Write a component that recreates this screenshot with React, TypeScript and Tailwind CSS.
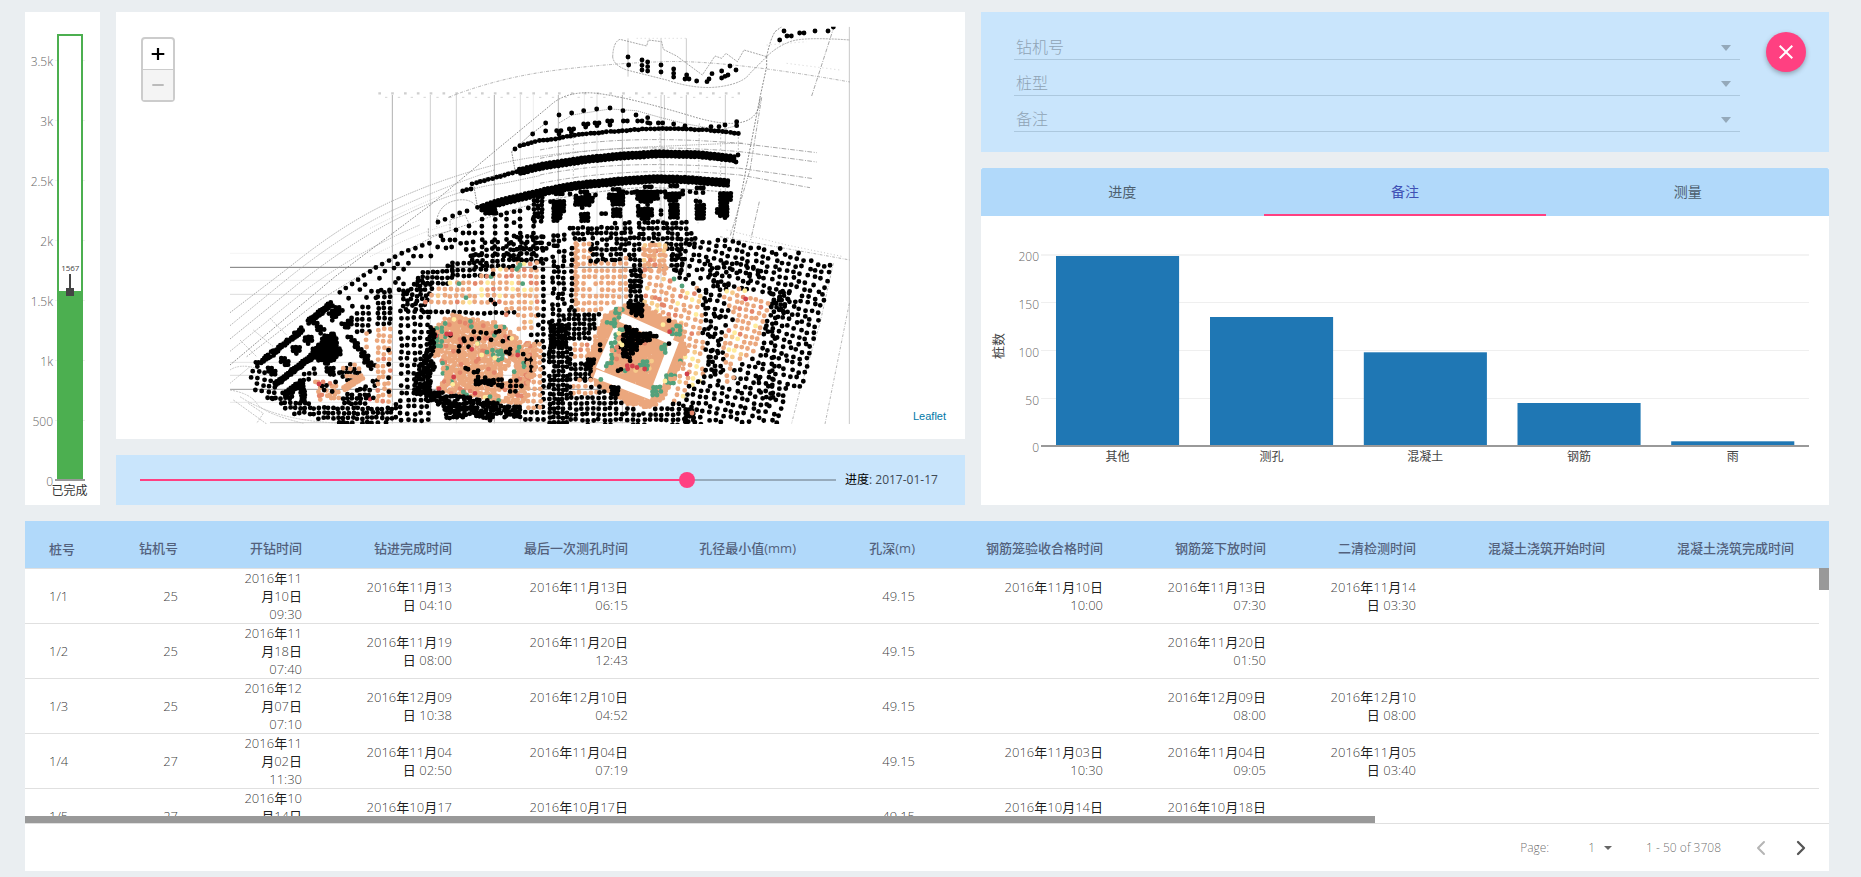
import React from "react";
import { ChevronLeft, ChevronRight } from "lucide-react";

type Pt = [number, number];

/* ---------- pile map ---------- */

const INK: Record<string, string> = {
  k: "#000000",
  o: "#eba77d",
  s: "#e4866b",
  g: "#53a17b",
  y: "#ffec9c",
  a: "#f6cb8b",
  r: "#d1404a",
};

let seed = 20170117;
const rnd = () => {
  seed = (seed + 0x6d2b79f5) | 0;
  let t = Math.imul(seed ^ (seed >>> 15), 1 | seed);
  t = (t + Math.imul(t ^ (t >>> 7), 61 | t)) ^ t;
  return ((t ^ (t >>> 14)) >>> 0) / 4294967296;
};

type Layer = { color: string; d: string; width?: number };
const layers: Layer[] = [];

const put = (items: { p: Pt; c: string }[]) => {
  const by: Record<string, string> = {};
  items.forEach(({ p, c }) => {
    by[c] = (by[c] || "") + `M${p[0].toFixed(1)} ${p[1].toFixed(1)}h.01`;
  });
  Object.keys(by).forEach((c) => layers.push({ color: INK[c], d: by[c] }));
};

const inside = (x: number, y: number, poly: Pt[]) => {
  let hit = false;
  for (let i = 0, j = poly.length - 1; i < poly.length; j = i++) {
    const [xi, yi] = poly[i];
    const [xj, yj] = poly[j];
    if (yi > y !== yj > y && x < ((xj - xi) * (y - yi)) / (yj - yi) + xi) hit = !hit;
  }
  return hit;
};

type FillOptions = {
  dx?: number;
  dy?: number;
  rot?: number;
  jit?: number;
  keep?: number;
  mix?: string;
  holes?: Pt[][];
  stagger?: boolean;
};

const fill = (poly: Pt[], o: FillOptions = {}) => {
  const { dx = 19, dy = 20, rot = 0, jit = 2, keep = 1, mix = "k", holes = [], stagger = false } = o;
  const xs = poly.map((p) => p[0]);
  const ys = poly.map((p) => p[1]);
  const cx = (Math.min(...xs) + Math.max(...xs)) / 2;
  const cy = (Math.min(...ys) + Math.max(...ys)) / 2;
  const reach = Math.hypot(Math.max(...xs) - cx, Math.max(...ys) - cy) + 20;
  const cos = Math.cos((rot * Math.PI) / 180);
  const sin = Math.sin((rot * Math.PI) / 180);
  const items: { p: Pt; c: string }[] = [];
  const ni = Math.ceil(reach / dx);
  const nj = Math.ceil(reach / dy);
  for (let j = -nj; j <= nj; j++) {
    for (let i = -ni; i <= ni; i++) {
      const u = i * dx + (stagger && j % 2 ? dx / 2 : 0) + (rnd() - 0.5) * 2 * jit;
      const v = j * dy + (rnd() - 0.5) * 2 * jit;
      const x = cx + u * cos - v * sin;
      const y = cy + u * sin + v * cos;
      if (rnd() > keep) continue;
      if (!inside(x, y, poly) || holes.some((h) => inside(x, y, h))) continue;
      items.push({ p: [x, y], c: mix[Math.floor(rnd() * mix.length)] });
    }
  }
  put(items);
};

const rect = (x0: number, y0: number, x1: number, y1: number): Pt[] => [
  [x0, y0],
  [x1, y0],
  [x1, y1],
  [x0, y1],
];

const chain = (pts: Pt[], step = 13, rows = 1, gap = 13, jit = 1, mix = "k") => {
  const items: { p: Pt; c: string }[] = [];
  for (let r = 0; r < rows; r++) {
    let carry = 0;
    for (let i = 0; i < pts.length - 1; i++) {
      const [x0, y0] = pts[i];
      const [x1, y1] = pts[i + 1];
      const len = Math.hypot(x1 - x0, y1 - y0);
      const nx = -(y1 - y0) / len;
      const ny = (x1 - x0) / len;
      let t = carry;
      for (; t <= len; t += step) {
        const off = r * gap;
        items.push({
          p: [
            x0 + ((x1 - x0) * t) / len + nx * off + (rnd() - 0.5) * 2 * jit,
            y0 + ((y1 - y0) * t) / len + ny * off + (rnd() - 0.5) * 2 * jit,
          ],
          c: mix[Math.floor(rnd() * mix.length)],
        });
      }
      carry = t - len;
    }
  }
  put(items);
};

const dots = (pts: Pt[], c = "k") => put(pts.map((p) => ({ p, c })));
const E = (pts: Pt[]): Pt[] => pts.map(([x, y]) => [x + 960, y]);
const C = (pts: Pt[]): Pt[] => pts.map(([x, y]) => [x + 540, y + 510]);
const path = (pts: Pt[]) => "M" + pts.map((p) => p.join(" ")).join("L");

/* northern islands */
dots(
  E([
    [264, 141], [266, 165], [306, 150], [306, 166], [306, 180], [323, 156], [323, 170], [323, 183],
    [363, 165], [363, 186], [401, 177], [401, 190], [401, 201], [440, 195], [435, 207], [447, 207],
    [470, 213], [501, 215], [507, 207], [516, 191], [545, 183], [545, 204], [555, 199], [564, 195],
    [570, 168], [588, 180], [732, 63], [719, 90], [741, 78], [754, 78], [779, 69], [792, 69],
    [825, 63], [864, 63], [880, 51],
  ]),
);
/* crown row */
dots(
  E([
    [-22, 372], [17, 339], [17, 363], [57, 315], [95, 309], [131, 302], [170, 297], [210, 294],
    [249, 302], [288, 315], [323, 323], [590, 335], [590, 347], [50, 362], [63, 362], [57, 372],
    [88, 357], [101, 357], [94, 367], [131, 342], [144, 342], [137, 351], [165, 339], [177, 339],
    [171, 347], [203, 333], [215, 333], [210, 345], [250, 333], [262, 333], [293, 333], [306, 333],
    [323, 338], [330, 340], [355, 339], [368, 339], [401, 342], [435, 348], [513, 350], [537, 350],
    [555, 345],
  ]),
);
dots([[885, 417], [728, 543], [740, 539], [753, 537]]);
chain([[900, 408], [960, 392], [1015, 385], [1070, 374], [1160, 366], [1290, 356], [1400, 357], [1470, 361], [1556, 370]], 12);
chain([[757, 522], [823, 504], [890, 485]], 12.5);
chain([[898, 478], [960, 463], [1020, 454], [1090, 443], [1200, 432], [1320, 425], [1440, 428], [1548, 440]], 11.8, 2, 13, 0.5);
chain([[898, 484], [960, 469], [1020, 460], [1090, 449], [1200, 438], [1320, 431], [1440, 434], [1548, 446]], 11.8, 1, 0, 0.5);
dots([[1554, 435], [1548, 456]]);
chain([[772, 591], [785, 588]], 13);
chain([[790, 586], [823, 574], [900, 555], [960, 541], [1020, 528], [1090, 517], [1200, 507], [1300, 500], [1400, 502], [1535, 513]], 11.8, 3, 7, 0.5);

/* scattered dots on the left shoulder */
dots([
  [654, 636], [675, 628], [698, 618], [719, 609], [741, 603], [708, 660], [747, 648], [663, 678],
  [669, 690], [690, 690], [705, 690], [722, 700], [653, 711], [678, 714], [695, 711], [729, 669],
  [747, 669], [765, 669], [785, 600], [800, 608], [812, 604], [825, 600], [843, 615], [860, 609],
  [882, 605], [900, 603], [925, 594], [882, 638], [882, 678],
]);
for (const x of [786, 825, 860, 900, 940]) chain([[x, 628], [x, 735]], 20.5);
fill([[785, 590], [830, 585], [830, 612], [785, 612]], { dx: 11, dy: 10 });
fill(rect(940, 560, 968, 635), { dx: 11, dy: 12 });
fill(rect(730, 685, 900, 750), { keep: 0.6 });

/* masses under the third row */
const mass = { dx: 10, dy: 9.5, jit: 1 };
fill(C([[450, 62], [492, 58], [492, 98], [478, 130], [460, 130], [458, 95]]), mass);
fill(C([[522, 48], [592, 44], [575, 78], [545, 85], [525, 75]]), mass);
fill(C(rect(536, 94, 572, 130)), mass);
fill(C([[618, 42], [672, 32], [678, 76], [638, 74]]), mass);
fill(C(rect(632, 80, 668, 116)), mass);
fill(C([[700, 34], [785, 34], [775, 55], [742, 76], [715, 62]]), mass);
fill(C(rect(706, 78, 764, 116)), mass);
fill(C([[788, 34], [868, 32], [840, 55], [825, 70], [800, 58]]), mass);
fill(C(rect(804, 68, 840, 118)), mass);
fill(E(rect(462, 582, 500, 628)), mass);
fill(E([[532, 545], [580, 548], [562, 600], [562, 632], [523, 605], [538, 590]]), mass);
dots(E([[363, 602], [363, 613], [185, 611], [197, 611], [468, 548], [489, 548], [468, 573], [480, 575], [555, 623], [570, 560]]));
dots(E([[90, 552], [108, 558], [125, 562], [260, 548], [275, 548], [290, 545], [450, 545], [375, 545]]));
for (const x of [57, 131, 228, 324, 401, 480]) {
  const y = 526 + Math.abs(x - 380) * 0.08;
  dots([[x + 951, y], [x + 963, y], [x + 970, y]]);
}

/* left shoulder and sparse belt */
chain([[360, 848], [455, 780], [540, 732], [640, 694]], 22);
fill([[365, 862], [460, 792], [550, 742], [650, 705], [650, 760], [610, 790], [600, 830], [530, 850], [420, 880], [400, 895]], {
  dx: 28, dy: 21, keep: 0.78, jit: 5, stagger: true,
});
fill([[540, 850], [590, 810], [640, 815], [630, 850], [610, 900], [540, 900]], { dx: 14, dy: 15, jit: 4 });
fill(rect(695, 752, 800, 805), { dx: 17, dy: 18 });
fill([[605, 780], [700, 765], [700, 815], [640, 840], [605, 835]], { dx: 15, dy: 17 });
fill([[740, 730], [860, 700], [960, 685], [960, 755], [900, 768], [760, 785]], { dx: 16, dy: 17, keep: 0.88, jit: 3 });

/* western wedge */
fill([[78, 1070], [125, 1080], [180, 1130], [160, 1180], [95, 1135]], { dx: 19, dy: 18, rot: 10 });
chain([[110, 1060], [190, 1000], [245, 955]], 9, 2, 8, 3);
chain([[262, 932], [335, 876]], 8, 2, 9, 2);
fill([[265, 925], [290, 930], [318, 965], [300, 975]], mass);
fill([[322, 910], [355, 885], [372, 905], [340, 938]], mass);
fill([[362, 940], [395, 922], [407, 940], [375, 962]], mass);
fill([[248, 985], [270, 973], [282, 995], [260, 1010]], mass);
fill([[210, 1015], [235, 1003], [247, 1025], [225, 1040]], mass);
fill([[178, 1045], [200, 1038], [210, 1062], [188, 1072]], mass);
fill([[138, 1075], [160, 1066], [172, 1090], [155, 1102]], mass);
fill([[275, 1020], [320, 970], [350, 962], [352, 1005], [372, 1030], [320, 1068], [285, 1050]], { dx: 9, dy: 9 });
chain([[165, 1118], [300, 1016]], 8, 2, 9, 2);
fill([[378, 975], [395, 975], [470, 1070], [450, 1082]], mass);
fill([[315, 1075], [345, 1070], [345, 1095], [325, 1098]], mass);
fill([[350, 1085], [400, 1055], [435, 1080], [400, 1120], [375, 1115]], { dx: 12, dy: 12, mix: "kko" });
chain([[370, 1132], [425, 1096]], 8, 2, 9, 1, "o");
chain([[190, 1150], [240, 1115]], 9, 2, 9, 2);
chain([[250, 1110], [255, 1180]], 9, 2, 9, 2);
fill([[205, 1140], [235, 1130], [225, 1160], [200, 1165]], { dx: 13, dy: 13 });
fill([[245, 1080], [290, 1072], [290, 1100], [255, 1112]], { dx: 15, dy: 15 });
fill([[285, 1115], [352, 1115], [357, 1165], [290, 1170]], { dx: 12, dy: 12, jit: 4, mix: "ooosokk" });
dots([[297, 1122], [450, 1167]], "r");
fill([[365, 1155], [430, 1130], [455, 1095], [480, 1100], [470, 1160], [430, 1185], [370, 1180]], { dx: 13, dy: 13, keep: 0.75, jit: 3 });
fill([[125, 1150], [200, 1160], [260, 1180], [340, 1185], [400, 1190], [528, 1180], [528, 1240], [350, 1240], [220, 1212]], {
  dx: 14.5, dy: 14.5, jit: 3,
});

/* western columns */
fill(rect(462, 842, 522, 945), { dx: 17, dy: 16 });
fill(rect(395, 885, 462, 970), { dx: 18, dy: 18, keep: 0.85 });
fill([[425, 960], [455, 980], [455, 1020], [430, 1010]], { dx: 16, mix: "o" });
fill(rect(460, 948, 522, 1185), { dx: 17, dy: 18, jit: 3, mix: "oooooooos" });
chain([[506, 1020], [506, 1180]], 42);
fill(rect(534, 895, 632, 1240), { dx: 20, dy: 20.5, jit: 3, keep: 0.97 });
chain([[612, 907], [700, 905], [770, 910], [885, 907]], 18);

/* orange belt */
fill([[608, 865], [690, 815], [765, 800], [860, 762], [960, 750], [960, 897], [940, 965], [890, 965], [882, 900], [868, 925], [850, 920], [850, 895], [720, 895], [620, 895]], {
  dx: 18.5, dy: 19.5, keep: 0.97, mix: "oooooooooossay",
});
dots([[717, 821], [738, 863], [813, 800], [908, 821], [895, 772], [900, 765], [890, 778]], "g");
dots([[819, 792], [813, 870], [825, 882], [945, 773], [955, 945], [955, 915]]);

/* round tower */
const tower: Pt[] = [
  [645, 950], [690, 912], [745, 922], [840, 938], [885, 978], [905, 998], [953, 1000], [953, 1070], [932, 1110],
  [912, 1182], [840, 1178], [780, 1164], [650, 1144], [670, 1100], [640, 1030],
];
const towerGaps: Pt[][] = [
  [[825, 1022], [850, 1025], [855, 1045], [835, 1045]],
  [[850, 1095], [880, 1050], [888, 1080], [862, 1120]],
  [[835, 1145], [870, 1140], [855, 1170], [838, 1165]],
  [[640, 1040], [662, 1040], [665, 1085], [640, 1130]],
];
fill(tower, { dx: 10, dy: 10, jit: 4, mix: "ooooooooooooos", holes: towerGaps });
const greens: Pt[][] = [
  [[640, 955], [690, 930], [675, 1000], [650, 1030], [640, 1020]],
  [[665, 1055], [695, 1070], [700, 1120], [670, 1110]],
  [[750, 932], [785, 940], [775, 965], [755, 960]],
  [[820, 938], [860, 945], [850, 965], [830, 960]],
  [[860, 990], [905, 1000], [895, 1030], [865, 1025]],
  [[905, 1045], [925, 1060], [915, 1095], [900, 1070]],
  [[790, 1015], [850, 1010], [850, 1060], [810, 1040]],
];
greens.forEach((g) => fill(g, { dx: 13, dy: 13, jit: 3, mix: "ggo" }));
fill(tower, { dx: 38, dy: 34, jit: 15, keep: 0.4, mix: "ssgsk" });
fill(C([[190, 560], [245, 572], [265, 592], [318, 600], [305, 620], [260, 612], [225, 615], [225, 590]]), { dx: 10, dy: 11, jit: 4, keep: 0.75 });
fill(C([[175, 480], [215, 465], [235, 500], [205, 530], [170, 540]]), { dx: 15, dy: 15, jit: 6, keep: 0.6 });
fill([[740, 940], [830, 945], [900, 1010], [870, 1040], [800, 980], [750, 1000]], { dx: 22, dy: 20, jit: 8, keep: 0.6 });
fill([[905, 1030], [935, 1040], [935, 1085], [915, 1060]], { dx: 12, dy: 12 });
fill([[850, 1105], [925, 1115], [905, 1150], [865, 1145]], { dx: 17, dy: 15, keep: 0.7 });
dots([[680, 972], [692, 972], [648, 977], [755, 1018], [893, 1035], [701, 1101], [657, 1137], [765, 1150]], "r");
dots([[730, 1146], [740, 1155], [836, 1171], [810, 1160]], "g");
dots([[702, 928], [772, 1001], [824, 1044], [785, 1035], [875, 985], [698, 1123], [795, 1162]], "y");
fill(
  C([[85, 440], [105, 440], [110, 470], [95, 540], [108, 560], [88, 630], [150, 640], [240, 655], [300, 672], [362, 675], [362, 715],
    [300, 712], [270, 722], [220, 708], [140, 718], [125, 680], [75, 660], [40, 635], [45, 590], [60, 540], [85, 500]]),
  { dx: 10, dy: 10, jit: 3.5, keep: 0.95 },
);

/* central columns */
fill(C([[350, 170], [440, 160], [440, 250], [415, 245], [350, 240]]), { dx: 15, dy: 17, keep: 0.85 });
fill(C([[415, 165], [448, 160], [448, 730], [375, 730], [375, 685], [410, 680], [425, 500], [375, 475], [378, 455], [415, 450], [412, 260]]), {
  dx: 18.5, dy: 19.5, keep: 0.95, jit: 2,
});
fill(C([[448, 155], [502, 160], [502, 430], [448, 430]]), { dx: 15.5, dy: 16, keep: 0.9, jit: 3 });
fill(C([[448, 430], [502, 430], [502, 500], [448, 500]]), { dx: 11, dy: 10 });
fill(C(rect(448, 500, 502, 730)), { dx: 13, dy: 14, jit: 2 });
fill(rect(922, 1000, 962, 1195), { dx: 18, dy: 19, mix: "o" });
fill(C([[508, 140], [600, 128], [700, 122], [860, 118], [885, 160], [900, 190], [850, 195], [850, 285], [805, 270], [800, 190], [725, 190], [720, 330], [690, 330], [690, 240], [575, 245], [575, 190], [510, 185]]), {
  dx: 14, dy: 16, jit: 3, keep: 0.86,
});
fill(C([[520, 182], [572, 182], [572, 245], [610, 250], [610, 240], [690, 232], [690, 350], [655, 370], [600, 400], [575, 400], [520, 390]]), {
  dx: 18, dy: 19.5, keep: 0.92, mix: "o",
});
chain(C([[527, 190], [527, 385]]), 14, 1, 0, 1, "o");
fill(C(rect(508, 185, 522, 400)), { dx: 14, dy: 18 });
fill(C(rect(542, 205, 600, 245)), { dx: 18, dy: 18, keep: 0.6 });
fill(C(rect(690, 260, 725, 375)), { dx: 14, dy: 15, jit: 3 });
fill(C([[728, 195], [755, 180], [800, 195], [803, 290], [825, 330], [900, 320], [905, 390], [915, 590], [850, 650], [815, 670], [850, 500], [840, 420], [760, 390], [728, 370]]), {
  dx: 20, dy: 19, rot: 14, jit: 3, mix: "oooooooooosya",
});
fill(C([[728, 198], [755, 182], [798, 198], [800, 270], [728, 270]]), { dx: 15, dy: 15, mix: "oooosa" });
dots(E([[402, 807], [426, 828]]), "g");
dots(E([[390, 812], [346, 863], [366, 884]]), "s");
fill(C([[505, 385], [575, 400], [600, 400], [590, 450], [565, 480], [505, 480]]), { dx: 15, dy: 14 });
fill(C([[520, 482], [568, 482], [560, 540], [520, 540]]), { dx: 18, dy: 18, mix: "oooos" });
fill(C([[503, 500], [520, 500], [520, 540], [560, 540], [580, 600], [503, 605]]), { dx: 15, dy: 15 });
fill(C(rect(520, 600, 590, 640)), { dx: 18, dy: 18, mix: "oook" });

/* square tower */
fill(
  C([[650, 385], [690, 372], [740, 375], [780, 402], [842, 430], [850, 480], [864, 500], [822, 600], [792, 650], [772, 675], [740, 686],
    [680, 672], [640, 640], [585, 615], [572, 570], [558, 540], [588, 460], [612, 408]]),
  { dx: 9.5, dy: 9.5, jit: 2, mix: "o" },
);
const band = (a: Pt, b: Pt) => layers.push({ color: "#ffffff", d: path(C([a, b])), width: 27 });
band([662, 412], [818, 482]);
band([655, 445], [600, 568]);
band([585, 580], [755, 646]);
band([824, 482], [772, 618]);
fill(C([[665, 450], [790, 495], [745, 620], [615, 568]]), { dx: 40, dy: 34, jit: 14, keep: 0.6, mix: "sag" });
[
  C([[640, 385], [675, 385], [660, 415], [642, 405]]),
  C([[615, 418], [650, 418], [645, 440], [615, 438]]),
  C([[810, 432], [848, 435], [842, 468], [812, 462]]),
  C([[778, 418], [805, 420], [800, 435], [785, 435]]),
  C([[830, 525], [850, 535], [845, 558], [832, 550]]),
  C([[800, 580], [828, 580], [820, 615], [795, 615]]),
  C([[755, 615], [788, 618], [780, 652], [752, 648]]),
  C([[592, 588], [615, 592], [610, 606], [596, 604]]),
  C([[785, 492], [805, 495], [800, 520], [785, 512]]),
  C([[712, 540], [748, 545], [742, 572], [712, 566]]),
].forEach((p) => fill(p, { dx: 11, dy: 11, mix: "gggggo" }));
fill(C([[650, 440], [678, 445], [655, 520], [655, 545], [615, 560], [630, 500]]), { dx: 12, dy: 12, jit: 4, mix: "ggggoyks" });
fill(C([[678, 436], [775, 468], [742, 488], [722, 492], [692, 545], [665, 535], [668, 480]]), { dx: 10, dy: 10, jit: 2 });
fill(C([[645, 555], [720, 555], [710, 575], [660, 585]]), { dx: 15, dy: 12, jit: 5, keep: 0.6, mix: "kkr" });
dots(E([[389, 965], [263, 1077], [314, 1077], [441, 1092]]), "r");
dots(E([[369, 944], [246, 1005], [375, 1113]]), "y");
dots(E([[387, 932], [387, 1001]]));
fill(C([[683, 366], [730, 370], [728, 415], [690, 402]]), { dx: 9, dy: 9, jit: 3 });
fill(C([[628, 615], [658, 618], [660, 650], [632, 642]]), { dx: 9, dy: 9 });
fill(C([[555, 535], [588, 540], [575, 578], [556, 562]]), { dx: 9, dy: 9 });
fill(C([[585, 462], [615, 465], [605, 525], [588, 520]]), { dx: 18, dy: 18, keep: 0.7 });

/* southern rows */
fill(C([[503, 605], [520, 605], [520, 640], [590, 640], [600, 615], [640, 648], [680, 680], [740, 692], [790, 672], [840, 660], [860, 735], [503, 735]]), {
  dx: 17, dy: 16.5, jit: 2.5, keep: 0.95,
});

/* eastern quarter */
const east = E([[545, 845], [600, 835], [695, 870], [672, 960], [640, 1040], [585, 1060], [580, 1118], [545, 1115], [555, 1060], [540, 1010], [580, 930]]);
fill(
  E([[420, 690], [560, 685], [720, 715], [878, 755], [850, 890], [795, 1130], [745, 1130], [715, 1245], [420, 1245], [425, 1160], [460, 1095], [490, 1095], [485, 850], [400, 790], [390, 700]]),
  { dx: 20.5, dy: 20.5, rot: 14, jit: 4.5, keep: 0.98, holes: [east] },
);
fill(E([[500, 740], [560, 750], [700, 780], [640, 820], [540, 830], [555, 1100], [500, 1100], [490, 900]]), { dx: 17, dy: 17, rot: 16, jit: 5, keep: 0.5 });
fill(E([[690, 840], [755, 840], [745, 910], [690, 930]]), { dx: 13, dy: 13, rot: 16, jit: 4, keep: 0.9 });
fill(E([[670, 930], [720, 930], [700, 1100], [720, 1160], [680, 1200], [640, 1130], [680, 1050]]), { dx: 20, dy: 20, jit: 5, keep: 0.6 });
fill(E([[440, 1180], [470, 1200], [465, 1240], [425, 1240]]), { dx: 11, dy: 11, jit: 3 });
fill(east, { dx: 18.5, dy: 18.5, rot: 16, jit: 3, mix: "ooooooooosya" });
dots(E([[617, 867]]), "r");
dots(E([[456, 1209]]), "s");

/* survey linework */
const dashed: { d: string; c: string; dash: string }[] = [
  { d: "M685 262Q830 205 990 183T1330 155T1890 216", c: "#a8a8a8", dash: "9 4 2 4" },
  { d: "M30 908L210 770Q370 640 517 573T823 465T1300 410T1560 400", c: "#999", dash: "4 3" },
  { d: "M30 947L210 800Q380 665 520 600T823 480", c: "#a5a5a5", dash: "4 3" },
  { d: "M30 987L230 825Q400 690 560 612T850 520L960 497", c: "#999", dash: "4 3" },
  { d: "M30 1024L260 838Q420 720 600 645", c: "#aaa", dash: "4 3" },
  { d: "M30 1065L345 800L631 585L823 425L990 287Q1040 240 1130 250T1420 320T1620 262", c: "#777", dash: "5 4" },
  { d: "M80 1040L300 870L430 790L640 680L780 630L960 575", c: "#999", dash: "5 4" },
  { d: "M450 740Q600 665 700 640M450 655Q560 600 631 570T709 540", c: "#ccc", dash: "3 4" },
  { d: "M650 630Q660 580 709 571T775 600M650 630V650M625 655V680L690 663V630L735 615L747 640", c: "#999", dash: "6 3" },
  { d: "M875 425L885 480L770 512M875 425L930 375L978 339M762 530L772 590", c: "#777", dash: "5 3" },
  { d: "M960 420Q1200 370 1560 400L1790 428M960 445Q1200 395 1560 425L1790 456", c: "#999", dash: "14 5 3 4" },
  { d: "M960 495Q1200 445 1560 475L1780 506M960 520Q1240 465 1560 495L1770 533", c: "#999", dash: "14 5 3 4" },
  { d: "M960 575Q1200 530 1300 533T1540 548", c: "#888", dash: "8 4" },
  { d: "M1017 339L1057 315L1170 297L1249 302L1323 323L1400 342L1500 360L1550 347", c: "#888", dash: "3 3" },
  { d: "M1178 140Q1180 95 1200 88L1280 108L1285 90L1325 95L1330 118L1370 138L1447 195L1485 138L1505 145L1518 130L1552 155L1572 120L1640 140M1178 140Q1180 165 1220 180L1340 210Q1430 240 1500 230T1590 190L1640 140Q1670 110 1710 95T1890 90", c: "#999", dash: "6 3" },
  { d: "M1640 140Q1650 90 1665 65L1685 50M1640 140V170L1620 262L1535 700", c: "#777", dash: "6 4" },
  { d: "M1625 262L1590 480L1530 680M1842 50L1775 258M1618 575L1592 690", c: "#999", dash: "12 4 3 4" },
  { d: "M1500 680L1890 750M1888 880L1815 1242M1840 760L1800 940L1740 1140L1715 1240", c: "#aaa", dash: "8 5 2 4" },
  { d: "M1520 660L1700 705L1870 740", c: "#bbb", dash: "3 7" },
  { d: "M1250 85H1400M1640 105L1760 95M1700 160L1860 180", c: "#ccc", dash: "3 9" },
  { d: "M100 960L160 1010M150 925L200 975M60 990L110 1040M30 1080Q60 1060 110 1075M30 1120L90 1070", c: "#bbb", dash: "5 3" },
  { d: "M30 1140Q90 1150 110 1180T250 1240M40 1170L140 1242M60 1160Q180 1240 400 1240M85 1180L130 1210L110 1240", c: "#bbb", dash: "6 3" },
  { d: "M1320 360V640M1438 340L1434 640M1502 360V550M1060 370V520M1555 370V440", c: "#bbb", dash: "6 5" },
];

const verticals: [number, string, number][] = [
  [517, "#b0b0b0", 1240], [631, "#cfcfcf", 1240], [709, "#cfcfcf", 1240], [823, "#b0b0b0", 1240], [901, "#dddddd", 1240],
  [940, "#eeeeee", 1240], [1015, "#b8b8b8", 1240], [1093, "#ebebeb", 640], [1131, "#dddddd", 1240], [1207, "#b0b0b0", 1240],
  [1323, "#cccccc", 900], [1333, "#cccccc", 640], [1399, "#c4c4c4", 800], [1516, "#cccccc", 560],
];
const horizontals: [number, string, number, number][] = [
  [730, "#f4f4f4", 30, 560], [772, "#777777", 30, 1350], [811, "#ededed", 30, 480], [853, "#dcdcdc", 30, 1250],
  [1057, "#e4e4e4", 30, 600], [1096, "#dcdcdc", 30, 1250], [1138, "#999999", 30, 1250], [1177, "#e8e8e8", 30, 1250],
  [1238, "#c9c9c9", 150, 1250],
];

function PileMap() {
  return (
    <svg className="block h-full w-full" viewBox="-312 6 2547 1281">
      <defs>
        <clipPath id="plan">
          <rect x="30" y="50" width="1860" height="1192" />
        </clipPath>
      </defs>
      <g clipPath="url(#plan)" fill="none">
        {verticals.map(([x, c, y2]) => (
          <path key={x} d={`M${x} 255V${y2}`} stroke={c} strokeWidth="3" />
        ))}
        {[1224, 1323, 1399].map((x) => (
          <path key={x} d={`M${x} 85V200`} stroke="#cccccc" strokeWidth="3" />
        ))}
        {horizontals.map(([y, c, x1, x2]) => (
          <path key={y} d={`M${x1} ${y}H${x2}`} stroke={c} strokeWidth="3" />
        ))}
        <path d="M475 250H1560" stroke="#cfcfcf" strokeWidth="7" strokeDasharray="8 30.5" />
        <path d="M495 262H1560" stroke="#d4d4d4" strokeWidth="3" strokeDasharray="7 31.5" />
        <path d={path([[1888, 50], [1888, 1242]])} stroke="#c8c8c8" strokeWidth="3" />
        {dashed.map((l, i) => (
          <path key={i} d={l.d} stroke={l.c} strokeWidth="2.6" strokeDasharray={l.dash} />
        ))}
        {layers.map((l, i) => (
          <path key={i} d={l.d} stroke={l.color} strokeWidth={l.width ?? 14.6} strokeLinecap={l.width ? "butt" : "round"} />
        ))}
      </g>
    </svg>
  );
}

/* ---------- gauges and charts ---------- */

const gaugeTicks = ["0", "500", "1k", "1.5k", "2k", "2.5k", "3k", "3.5k"];

function ProgressGauge() {
  return (
    <svg className="block h-full w-full" viewBox="25 12 75 493">
      {gaugeTicks.map((t, i) => (
        <g key={t}>
          <path d={`M55 ${480.5 - i * 60}H85`} stroke="#eeeeee" />
          <text x="53" y={485.5 - i * 60} textAnchor="end" fontSize="12" fontWeight="300" fill="#666666">
            {t}
          </text>
        </g>
      ))}
      <rect x="58" y="35" width="24" height="445" fill="#ffffff" stroke="#4caf50" strokeWidth="2" />
      <rect x="57" y="291" width="26" height="189" fill="#4caf50" />
      <path d="M55 480H85" stroke="#999999" strokeWidth="2" />
      <path d="M70 274V290" stroke="#444444" strokeWidth="2" />
      <rect x="66" y="288" width="8" height="8" fill="#444444" />
      <text x="70.3" y="271" textAnchor="middle" fontSize="8" fill="#444444">
        1567
      </text>
      <text x="69.6" y="494.5" textAnchor="middle" fontSize="12" fill="#333333">
        已完成
      </text>
    </svg>
  );
}

const bars = [
  { label: "其他", x: 1056, top: 256 },
  { label: "测孔", x: 1210, top: 317 },
  { label: "混凝土", x: 1363.8, top: 352.3 },
  { label: "钢筋", x: 1517.5, top: 403 },
  { label: "雨", x: 1671.2, top: 441.3 },
];
const levels: [string, number][] = [["0", 446], ["50", 398.5], ["100", 350.5], ["150", 302.5], ["200", 255]];

function RemarkChart() {
  return (
    <svg className="block h-full w-full" viewBox="981 216 848 289">
      {levels.map(([t, y]) => (
        <g key={t}>
          <path d={`M1041 ${y}H1809`} stroke="#efefef" strokeWidth={t === "200" ? 2 : 1} opacity={t === "200" ? 0.7 : 1} />
          <text x="1039" y={y + 6} textAnchor="end" fontSize="12" fontWeight="300" fill="#666666">
            {t}
          </text>
        </g>
      ))}
      {bars.map((b) => (
        <g key={b.label}>
          <rect x={b.x} y={b.top} width="123.1" height={446 - b.top} fill="#1f77b4" />
          <text x={b.x + 61.5} y="460.8" textAnchor="middle" fontSize="12" fill="#444444">
            {b.label}
          </text>
        </g>
      ))}
      <path d="M1041 446H1809" stroke="#999999" strokeWidth="2" />
      <text transform="translate(1002.5 346) rotate(-90)" textAnchor="middle" fontSize="13" fill="#444444">
        桩数
      </text>
    </svg>
  );
}

/* ---------- table ---------- */

const headers = [
  "桩号", "钻机号", "开钻时间", "钻进完成时间", "最后一次测孔时间", "孔径最小值(mm)", "孔深(m)",
  "钢筋笼验收合格时间", "钢筋笼下放时间", "二清检测时间", "混凝土浇筑开始时间", "混凝土浇筑完成时间",
];

const rows: string[][] = [
  ["1/1", "25", "2016年11\n月10日\n09:30", "2016年11月13\n日 04:10", "2016年11月13日\n06:15", "", "49.15", "2016年11月10日\n10:00", "2016年11月13日\n07:30", "2016年11月14\n日 03:30", "", ""],
  ["1/2", "25", "2016年11\n月18日\n07:40", "2016年11月19\n日 08:00", "2016年11月20日\n12:43", "", "49.15", "", "2016年11月20日\n01:50", "", "", ""],
  ["1/3", "25", "2016年12\n月07日\n07:10", "2016年12月09\n日 10:38", "2016年12月10日\n04:52", "", "49.15", "", "2016年12月09日\n08:00", "2016年12月10\n日 08:00", "", ""],
  ["1/4", "27", "2016年11\n月02日\n11:30", "2016年11月04\n日 02:50", "2016年11月04日\n07:19", "", "49.15", "2016年11月03日\n10:30", "2016年11月04日\n09:05", "2016年11月05\n日 03:40", "", ""],
  ["1/5", "27", "2016年10\n月14日\n\u00a0", "2016年10月17\n\u00a0", "2016年10月17日\n\u00a0", "", "49.15", "2016年10月14日\n\u00a0", "2016年10月18日\n\u00a0", "", "", ""],
];

const columns =
  "grid grid-cols-[66px_63px_124px_150px_176px_168px_119px_188px_163px_150px_189px_189px] pl-6";

/* digits are set light while the ideographs keep their regular weight */
function Mixed({ text }: { text: string }) {
  return (
    <>
      {text.split(/([\u4e00-\u9fff]+)/).map((part, i) =>
        i % 2 ? (
          <span key={i} className="font-normal text-black/90">
            {part}
          </span>
        ) : (
          part
        ),
      )}
    </>
  );
}

function PileTable() {
  return (
    <section className="flex h-[350px] w-full flex-col bg-white">
      <div className={`${columns} h-[47px] shrink-0 items-center bg-[#b1d9fa] pt-[9px] text-[13px] font-medium text-[#53617c]`}>
        {headers.map((h, i) => (
          <div key={h} className={i === 0 ? "pt-0.5 whitespace-nowrap" : "flex justify-end whitespace-nowrap"}>
            {h}
          </div>
        ))}
      </div>
      <div className="relative h-[255px] shrink-0 overflow-hidden">
        <div className="mr-2.5">
          {rows.map((r) => (
            <div key={r[0]} className={`${columns} h-[55px] items-center border-t border-[#e0e0e0] text-[13px] leading-[18px] font-light text-black/80`}>
              {r.map((c, i) => (
                <div key={i} className={i === 0 ? "" : "text-right whitespace-pre"}>
                  <Mixed text={c} />
                </div>
              ))}
            </div>
          ))}
        </div>
        <div className="absolute top-0 right-0 h-[22px] w-2.5 bg-[#999999]" />
        <div className="absolute bottom-0 left-0 h-[7px] w-[1350px] bg-[#999999]" />
      </div>
      <div className="flex h-12 items-center justify-end border-t border-[#e0e0e0] pr-4 text-xs font-light text-black/60">
        <span className="mr-[39px]">Page:</span>
        <span className="mr-[9px]">1</span>
        <svg className="mr-[34px] h-1 w-2" viewBox="0 0 8 4">
          <path d="M0 0H8L4 4Z" fill="#666666" />
        </svg>
        <span className="mr-[28px]">1 - 50 of 3708</span>
        <ChevronLeft className="mr-4 text-[#b5b5b5]" size={24} strokeWidth={2} />
        <ChevronRight className="text-[#555555]" size={24} strokeWidth={2.3} />
      </div>
    </section>
  );
}

/* ---------- page ---------- */

function SelectField({ label }: { label: string }) {
  return (
    <div className="flex h-9 items-end">
      <div className="flex h-6 w-full items-center justify-between border-b border-[#acc8de] pr-[9px] pb-0.5 pl-0.5 text-base leading-5 text-[#8fa3b4]">
        <span className="font-light">{label}</span>
        <svg className="mt-0.5 h-[6px] w-2.5" viewBox="0 0 10 6">
          <path d="M0 0H10L5 6Z" fill="#94a9ba" />
        </svg>
      </div>
    </div>
  );
}

export default function App() {
  return (
    <main className="flex h-[877px] w-[1861px] flex-col gap-4 overflow-hidden bg-[#eaeef1] pt-3 pl-[25px] font-['Open_Sans','Noto_Sans_CJK_SC',sans-serif]">
      <div className="flex h-[493px] gap-4">
        <section className="w-[75px] bg-white">
          <ProgressGauge />
        </section>

        <div className="flex w-[849px] flex-col gap-4">
          <section className="relative h-[427px] bg-white">
            <PileMap />
            <div className="absolute top-[25px] left-[25px] flex h-[65px] w-[34px] flex-col rounded border-2 border-[#cccccc] bg-white">
              <button className="flex h-[30px] items-center justify-center">
                <svg width="14" height="14" viewBox="0 0 14 14">
                  <path d="M.7 7H13.3M7 1V13" stroke="#000000" strokeWidth="2.2" />
                </svg>
              </button>
              <button className="flex h-[31px] items-center justify-center border-t border-[#cccccc] bg-[#f4f4f4]">
                <svg width="14" height="14" viewBox="0 0 14 14">
                  <path d="M1.3 7H12.7" stroke="#bbbbbb" strokeWidth="2" />
                </svg>
              </button>
            </div>
            <a className="absolute right-[19px] bottom-[15px] font-['Liberation_Sans'] text-[11px] leading-4 text-[#0078a8]">Leaflet</a>
          </section>
          <section className="flex h-[50px] items-center bg-[#c9e5fc] pl-6">
            <div className="relative flex h-4 w-[696px] items-center">
              <div className="h-0.5 w-[547px] bg-[#ff4081]" />
              <div className="h-0.5 flex-1 bg-[#97abbc]" />
              <div className="absolute left-[539px] size-4 rounded-full bg-[#ff4081]" />
            </div>
            <p className="ml-[9px] text-xs whitespace-nowrap text-[#3f4a55]">
              <span className="text-black">进度</span>: 2017-01-17
            </p>
          </section>
        </div>

        <div className="flex w-[848px] flex-col gap-4">
          <section className="flex h-[140px] bg-[#c9e5fc] pl-[33px]">
            <div className="w-[726px] pt-3">
              <SelectField label="钻机号" />
              <SelectField label="桩型" />
              <SelectField label="备注" />
            </div>
            <button className="mt-5 ml-[26px] flex size-10 items-center justify-center rounded-full bg-[#ff4081] shadow-[0_2px_5px_rgba(0,0,0,0.3)]">
              <svg width="24" height="24" viewBox="0 0 24 24">
                <path
                  fill="#ffffff"
                  d="M19 6.41L17.59 5 12 10.59 6.41 5 5 6.41 10.59 12 5 17.59 6.41 19 12 13.41 17.59 19 19 17.59 13.41 12z"
                />
              </svg>
            </button>
          </section>
          <section className="flex h-[337px] flex-col bg-white">
            <div className="flex h-12 shrink-0 rounded-t-[2px] bg-[#b1d9fa] text-sm text-[#4d5f6e]">
              <div className="flex flex-1 items-center justify-center">进度</div>
              <div className="flex flex-1 items-center justify-center border-b-2 border-[#ff4081] pt-0.5 text-[#3f51b5]">备注</div>
              <div className="flex flex-1 items-center justify-center">测量</div>
            </div>
            <div className="h-[289px]">
              <RemarkChart />
            </div>
          </section>
        </div>
      </div>

      <div className="w-[1804px]">
        <PileTable />
      </div>
    </main>
  );
}
